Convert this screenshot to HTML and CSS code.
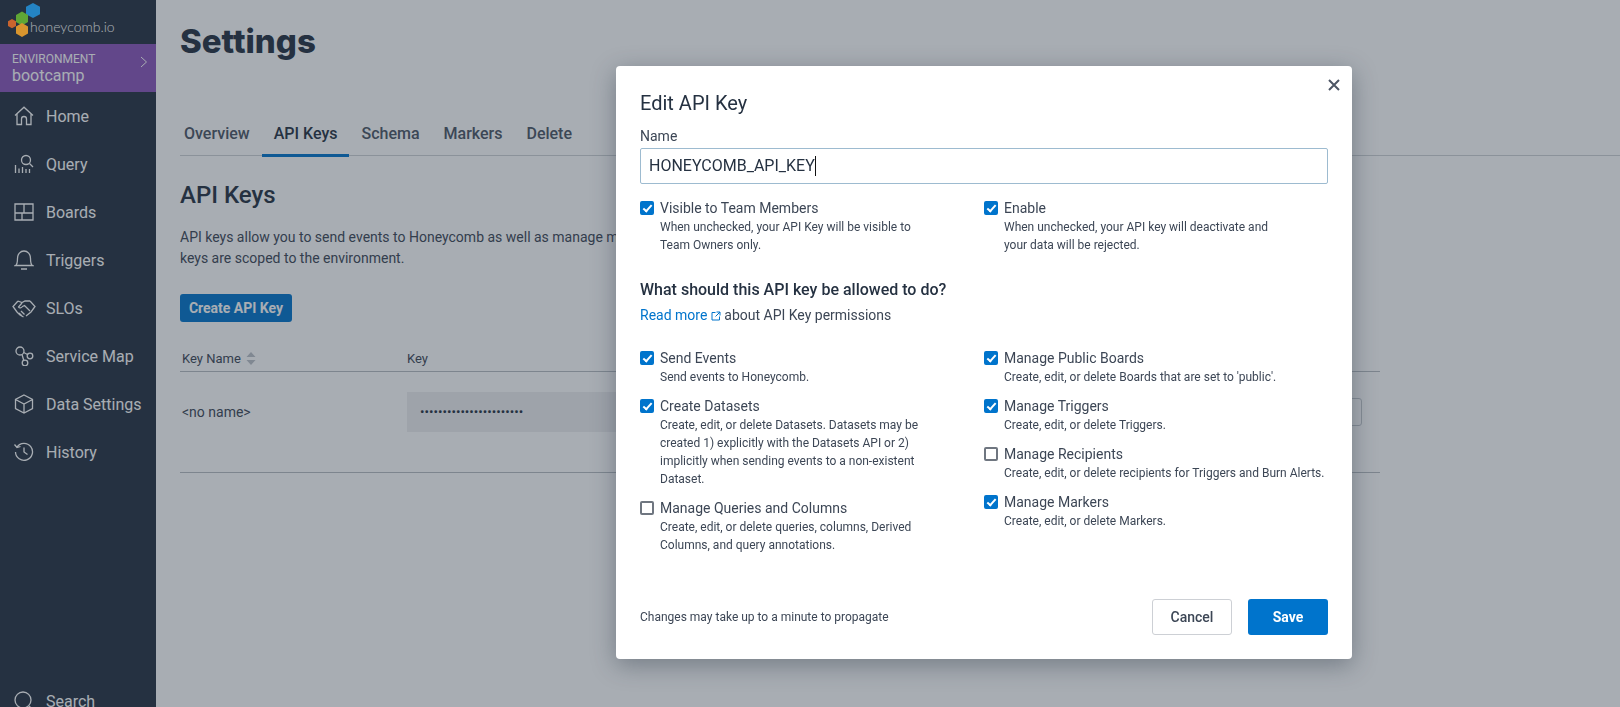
FILE: index.html
```html
<!DOCTYPE html>
<html lang="en">

<head>
    <meta charset="UTF-8">
    <meta name="viewport" content="width=device-width, initial-scale=1.0">
    <title>Settings</title>

    <link rel="stylesheet" href="styles.css">
</head>

<body>

    <!-- Sidebar -->
    <aside class="sidebar">
        <div class="logo">
            <svg class="logo-mark" width="34" height="36" viewBox="0 0 34 36">
                <polygon points="25,0 32,3.800 32,11.200 25,15 18,11.200 18,3.800" fill="#2484c4" />
                <polygon points="14,8.500 20,12 20,19 14,22.500 8,19 8,12" fill="#5fa635" />
                <polygon points="4,16 8,18.200 8,23 4,25.200 0,23 0,18.200" fill="#c9642e" />
                <polygon points="14,20 20,23.500 20,30.500 14,34 8,30.500 8,23.500" fill="#d8952e" />
            </svg>
            <span class="logo-text">honeycomb.io</span>
        </div>

        <div class="env">
            <div>
                <div class="env-label">ENVIRONMENT</div>
                <div class="env-name">bootcamp</div>
            </div>
            <svg class="env-arrow" width="8" height="12" viewBox="0 0 8 12">
                <path d="M1 1l5.500 5L1 11" />
            </svg>
        </div>

        <nav>
            <a class="nav-item">
                <svg viewBox="0 0 20 20"><path d="M1 9.500L10 1.200l9 8.300M3 8v10.500h4.500V13a2.500 2.500 0 0 1 5 0v5.500H17V8" /></svg>
                Home
            </a>
            <a class="nav-item">
                <svg viewBox="0 0 20 20"><circle cx="12" cy="6" r="4.500" /><path d="M15.500 9.500L19 13M1.500 11v8M5 14.500V19M8.500 13v6M12 15v4M15.500 15v4" /></svg>
                Query
            </a>
            <a class="nav-item">
                <svg viewBox="0 0 20 20"><path d="M1 2h18v16H1zM10 2v9M1 11h18M8 11v7" /></svg>
                Boards
            </a>
            <a class="nav-item">
                <svg viewBox="0 0 20 20"><path d="M1.500 15.500c1.800-1 2-3.500 2-7 0-4.500 2.800-7.500 6.500-7.500s6.500 3 6.500 7.500c0 3.500.2 6 2 7zM7 19h6" /></svg>
                Triggers
            </a>
            <a class="nav-item nav-wide">
                <svg viewBox="0 0 24 20"><path d="M6 3L1 8.500 5 14l3 3 3.500 2M18 3l5 5.500-4 5.500-5 4M6 3l4 1.500L13 3l5 0M10 5L6.500 9c1 1.500 3 1 4-.5l2-1 5.500 5.500M9 13l3.500 3.500M7 15l3 3" /></svg>
                SLOs
            </a>
            <a class="nav-item">
                <svg viewBox="0 0 20 20"><circle cx="6" cy="5" r="4" /><circle cx="16" cy="10" r="2.800" /><circle cx="11" cy="17" r="2.800" /><path d="M9.800 6.500l3.700 2M8 8.500l1.800 6" /></svg>
                Service Map
            </a>
            <a class="nav-item">
                <svg viewBox="0 0 20 20"><path d="M10 1l8.500 4.500v9L10 19l-8.500-4.500v-9zM1.500 5.500L10 10l8.500-4.500M10 10v9" /></svg>
                Data Settings
            </a>
            <a class="nav-item">
                <svg viewBox="0 0 20 20"><path d="M3 5a8.500 8.500 0 1 1-1.500 5M.5 2.500L3 5.500l3.500-1M10 5.500V10l3.500 2.500" /></svg>
                History
            </a>
            <a class="nav-item nav-search">
                <svg viewBox="0 0 20 20"><circle cx="9" cy="9" r="8" /><path d="M15 15l4 4" /></svg>
                Search
            </a>
        </nav>
    </aside>

    <!-- Page behind the modal -->
    <main class="main">
        <h1>Settings</h1>

        <div class="tabs">
            <a class="tab">Overview</a>
            <a class="tab active">API Keys</a>
            <a class="tab">Schema</a>
            <a class="tab">Markers</a>
            <a class="tab">Delete</a>
        </div>

        <h2>API Keys</h2>
        <p class="intro">API keys allow you to send events to Honeycomb as well as manage markers<br>keys are scoped to the environment.</p>
        <button class="create-btn">Create API Key</button>

        <div class="keys">
            <div class="keys-head">
                <span class="col-name">Key Name
                    <svg class="sort" width="10" height="13" viewBox="0 0 10 13"><path d="M5 0l4.500 5h-9zM5 13L.5 8h9z" /></svg>
                </span>
                <span>Key</span>
            </div>
            <div class="keys-row">
                <span class="col-name">&lt;no name&gt;</span>
                <div class="key-value">•••••••••••••••••••••••</div>
                <div class="key-action"></div>
            </div>
        </div>
    </main>

    <div class="overlay"></div>

    <!-- Edit API Key Modal -->
    <section class="modal">
        <svg class="close" width="12" height="12" viewBox="0 0 12 12"><path d="M1 1l10 10M11 1L1 11" /></svg>

        <h3 class="modal-title">Edit API Key</h3>

        <label class="field-label">Name</label>
        <div class="field">HONEYCOMB_API_KEY<span class="caret"></span></div>

        <div class="columns top-options">
            <div class="option">
                <input type="checkbox" class="check" checked>
                <div>
                    <div class="option-name">Visible to Team Members</div>
                    <div class="option-desc">When unchecked, your API Key will be visible to<br>Team Owners only.</div>
                </div>
            </div>
            <div class="option">
                <input type="checkbox" class="check" checked>
                <div>
                    <div class="option-name">Enable</div>
                    <div class="option-desc">When unchecked, your API key will deactivate and<br>your data will be rejected.</div>
                </div>
            </div>
        </div>

        <h4 class="perm-title">What should this API key be allowed to do?</h4>
        <p class="perm-link"><a>Read more
                <svg width="10" height="10" viewBox="0 0 10 10"><path d="M8.500 5.500V9H1V1.500h3.500M5.500 1H9v3.500M9 1L4.500 5.500" /></svg></a>
            about API Key permissions</p>

        <div class="columns">
            <div>
                <div class="option">
                    <input type="checkbox" class="check" checked>
                    <div>
                        <div class="option-name">Send Events</div>
                        <div class="option-desc">Send events to Honeycomb.</div>
                    </div>
                </div>
                <div class="option">
                    <input type="checkbox" class="check" checked>
                    <div>
                        <div class="option-name">Create Datasets</div>
                        <div class="option-desc">Create, edit, or delete Datasets. Datasets may be<br>created 1) explicitly with the Datasets API or 2)<br>implicitly when sending events to a non-existent<br>Dataset.</div>
                    </div>
                </div>
                <div class="option">
                    <input type="checkbox" class="check">
                    <div>
                        <div class="option-name">Manage Queries and Columns</div>
                        <div class="option-desc">Create, edit, or delete queries, columns, Derived<br>Columns, and query annotations.</div>
                    </div>
                </div>
            </div>
            <div>
                <div class="option">
                    <input type="checkbox" class="check" checked>
                    <div>
                        <div class="option-name">Manage Public Boards</div>
                        <div class="option-desc">Create, edit, or delete Boards that are set to 'public'.</div>
                    </div>
                </div>
                <div class="option">
                    <input type="checkbox" class="check" checked>
                    <div>
                        <div class="option-name">Manage Triggers</div>
                        <div class="option-desc">Create, edit, or delete Triggers.</div>
                    </div>
                </div>
                <div class="option">
                    <input type="checkbox" class="check">
                    <div>
                        <div class="option-name">Manage Recipients</div>
                        <div class="option-desc">Create, edit, or delete recipients for Triggers and Burn Alerts.</div>
                    </div>
                </div>
                <div class="option">
                    <input type="checkbox" class="check" checked>
                    <div>
                        <div class="option-name">Manage Markers</div>
                        <div class="option-desc">Create, edit, or delete Markers.</div>
                    </div>
                </div>
            </div>
        </div>

        <div class="modal-footer">
            <span class="note">Changes may take up to a minute to propagate</span>
            <div class="modal-buttons">
                <button class="btn-cancel">Cancel</button>
                <button class="btn-save">Save</button>
            </div>
        </div>
    </section>

</body>

</html>
```

FILE: styles.css
```css
/* General Styling */
html,
body {
    height: 100%;
}

body {
    font-family: 'Roboto', sans-serif;
    background-color: #ffffff;
    margin: 0;
    color: #253141;
    display: flex;
    overflow: hidden;
}

button {
    font-family: inherit;
    cursor: pointer;
}

/* Sidebar */
.sidebar {
    width: 156px;
    flex-shrink: 0;
    height: 707px;
    overflow: hidden;
    background-color: #253141;
    color: #ffffff;
}

.logo {
    height: 44px;
    box-sizing: border-box;
    padding: 3px 0 0 8px;
    display: flex;
    align-items: flex-start;
}

/* logo keeps its colour above the overlay */
.logo-mark {
    flex-shrink: 0;
    position: relative;
    z-index: 2;
}

.logo-text {
    font-family: 'Lato', sans-serif;
    font-weight: 300;
    font-size: 14px;
    line-height: 18px;
    margin: 15px 0 0 -12px;
}

.env {
    height: 48px;
    box-sizing: border-box;
    padding: 8px 8px 0 12px;
    background-color: #8b56bb;
    display: flex;
    justify-content: space-between;
}

.env-label {
    font-size: 12px;
    line-height: 15px;
}

.env-name {
    font-size: 16px;
    line-height: 18px;
}

.env-arrow {
    margin-top: 4px;
}

.env-arrow path {
    fill: none;
    stroke: #ffffff;
    stroke-width: 1;
}

.nav-item {
    height: 48px;
    padding-left: 14px;
    display: flex;
    align-items: center;
    gap: 12px;
    font-size: 16px;
}

.nav-item svg {
    width: 20px;
    height: 20px;
    flex-shrink: 0;
    fill: none;
    stroke: #ffffff;
    stroke-width: 1.300;
}

.nav-wide {
    padding-left: 12px;
    gap: 10px;
}

.nav-wide svg {
    width: 24px;
}

.nav-search {
    margin-top: 201px;
}

/* Main Page */
.main {
    flex: 1;
    min-width: 0;
    padding-left: 24px;
}

h1 {
    font-family: 'Inter', sans-serif;
    font-size: 33px;
    font-weight: 800;
    line-height: 40px;
    margin: 21px 0 0;
}

.tabs {
    display: flex;
    height: 45px;
    margin-top: 49px;
    border-bottom: 1px solid #cfd2d6;
}

.tab {
    padding: 14px 12px 0;
    font-size: 16px;
    font-weight: 500;
    color: #4c5564;
}

.tab:first-child {
    padding-left: 4px;
}

.tab.active {
    color: #253141;
    border-bottom: 3px solid #0074cc;
    height: 30px;
}

h2 {
    font-size: 24px;
    font-weight: 500;
    line-height: 32px;
    margin: 23px 0 0;
}

.intro {
    width: 436px;
    white-space: nowrap;
    overflow: hidden;
    font-size: 14px;
    line-height: 21px;
    margin: 16px 0 0;
    color: #3c4655;
}

.create-btn {
    display: block;
    width: 112px;
    height: 28px;
    margin-top: 25px;
    padding: 0;
    border: none;
    border-radius: 3px;
    background-color: #0074cc;
    color: #ffffff;
    font-size: 14px;
    font-weight: 700;
}

/* Keys Table */
.keys {
    width: 1200px;
    margin-top: 24px;
    font-size: 13px;
    color: #3c4655;
}

.keys-head {
    height: 25px;
    display: flex;
    align-items: center;
    border-bottom: 1px solid #b8bcc2;
}

.col-name {
    width: 225px;
    flex-shrink: 0;
    padding-left: 2px;
}

.sort {
    fill: #bcc1c8;
    vertical-align: -2px;
    margin-left: 2px;
}

.keys-row {
    height: 101px;
    box-sizing: border-box;
    padding-top: 20px;
    display: flex;
    align-items: flex-start;
    border-bottom: 1px solid #b8bcc2;
}

.keys-row .col-name {
    font-size: 14px;
    line-height: 40px;
}

.key-value {
    width: 700px;
    height: 40px;
    line-height: 40px;
    padding-left: 13px;
    box-sizing: border-box;
    background-color: #eeeef1;
    font-size: 13.300px;
    color: #253141;
}

.key-action {
    margin: 6px 18px 0 auto;
    width: 180px;
    height: 26px;
    border: 1px solid #c4c8cd;
    border-radius: 3px;
}

/* Overlay and Modal */
.overlay {
    position: fixed;
    inset: 0;
    background-color: rgba(37, 49, 65, 0.4);
}

.modal {
    position: absolute;
    top: 66px;
    left: 616px;
    width: 736px;
    height: 593px;
    box-sizing: border-box;
    padding: 22px 24px 0;
    background-color: #ffffff;
    border-radius: 4px;
    box-shadow: 0 6px 24px rgba(37, 49, 65, 0.4);
}

.close {
    position: absolute;
    top: 13px;
    right: 12px;
    fill: none;
    stroke: #4c5564;
    stroke-width: 2;
}

.modal-title {
    font-size: 20px;
    font-weight: 400;
    line-height: 30px;
    margin: 0;
}

.field-label {
    display: block;
    font-size: 14px;
    line-height: 18px;
    margin-top: 9px;
    color: #3c4655;
}

.field {
    height: 36px;
    box-sizing: border-box;
    margin-top: 3px;
    padding-left: 8px;
    border: 1px solid #9dbbd0;
    border-radius: 2px;
    font-size: 16px;
    line-height: 34px;
    display: flex;
    align-items: center;
}

.caret {
    width: 1px;
    height: 20px;
    background-color: #111111;
}

.columns {
    display: grid;
    grid-template-columns: 344px 344px;
}

.top-options {
    margin-top: 15px;
}

.option {
    display: flex;
    align-items: flex-start;
    gap: 6px;
    margin-bottom: 11px;
}

.check {
    appearance: none;
    position: relative;
    width: 14px;
    height: 14px;
    flex-shrink: 0;
    margin: 2px 0 0;
    background-color: #ffffff;
    border: 2px solid #6f7680;
    border-radius: 2px;
    box-sizing: border-box;
}

.check:checked {
    background-color: #0074cc;
    border-color: #0074cc;
}

.check:checked::after {
    content: "";
    position: absolute;
    left: 2.500px;
    top: -0.500px;
    width: 3px;
    height: 7px;
    border: solid #ffffff;
    border-width: 0 2px 2px 0;
    transform: rotate(42deg);
}

.option-name {
    font-size: 14px;
    line-height: 19px;
    color: #3c4655;
}

.option-desc {
    font-size: 12px;
    line-height: 18px;
    color: #3c4655;
}

.perm-title {
    font-size: 16px;
    font-weight: 500;
    line-height: 20px;
    margin: 15px 0 0;
}

.perm-link {
    font-size: 14px;
    line-height: 20px;
    margin: 5px 0 24px;
    color: #3c4655;
}

.perm-link a {
    color: #0074cc;
}

.perm-link svg {
    fill: none;
    stroke: #0074cc;
    stroke-width: 1;
    vertical-align: -1px;
}

.modal-footer {
    position: absolute;
    left: 24px;
    right: 24px;
    bottom: 24px;
    display: flex;
    justify-content: space-between;
    align-items: center;
}

.note {
    font-size: 12px;
    color: #3c4655;
}

.modal-buttons {
    display: flex;
    gap: 16px;
}

.btn-cancel,
.btn-save {
    width: 80px;
    height: 36px;
    padding: 0;
    border-radius: 3px;
    font-size: 14px;
}

.btn-cancel {
    background-color: #ffffff;
    border: 1px solid #cdd0d5;
    font-weight: 500;
    color: #3c4655;
}

.btn-save {
    background-color: #0074cc;
    border: none;
    color: #ffffff;
    font-weight: 700;
}
```
